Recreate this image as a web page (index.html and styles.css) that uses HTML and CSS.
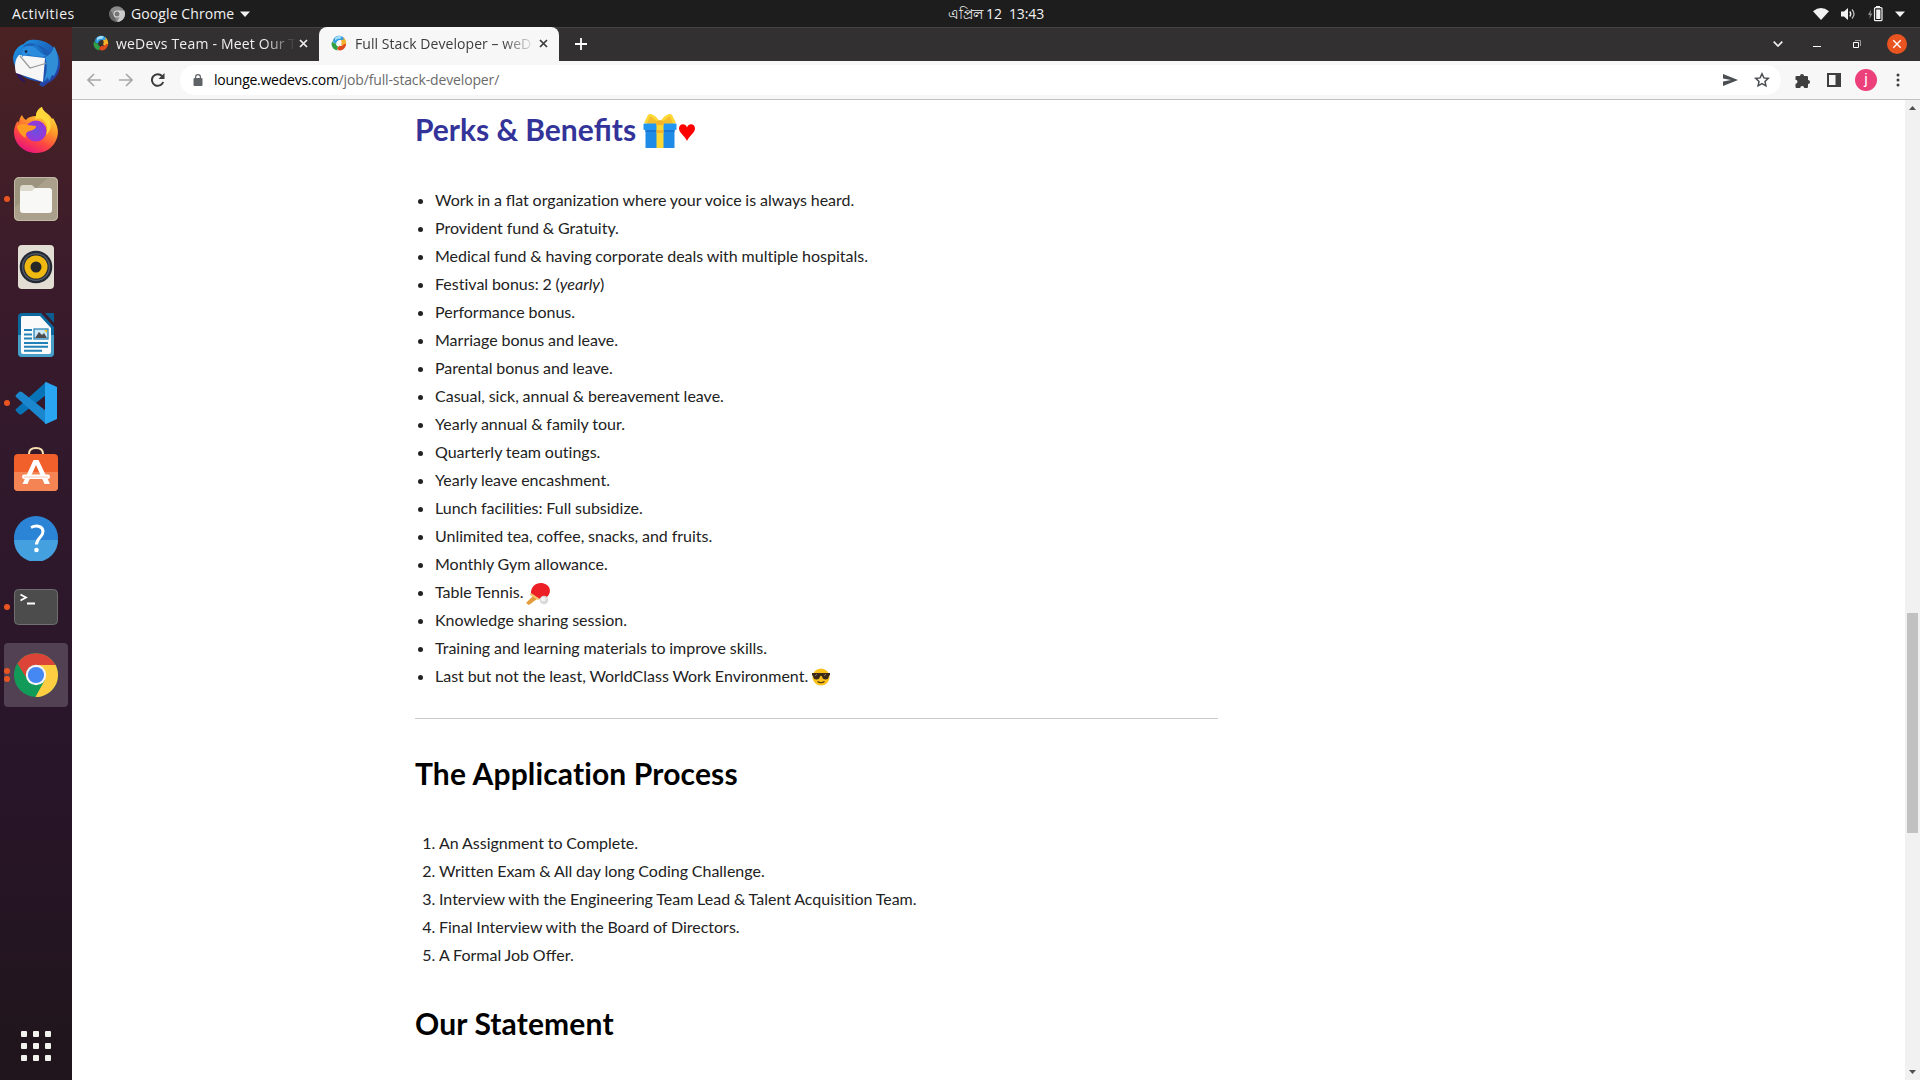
FILE: index.html
```html
<!DOCTYPE html>
<html lang="en">
<head>
<meta charset="utf-8">
<title>Full Stack Developer – weDevs</title>
<link rel="stylesheet" href="styles.css">
</head>
<body>
<svg class="defs" width="0" height="0" aria-hidden="true">
  <defs>
    <symbol id="favicon" viewBox="0 0 16 16">
      <path d="M2 6C2.500 2.500 5.500.3 9 .8c2.500.4 4.500 2 5 4.200L9.800 5C7.300 4.500 5.500 6 5.200 8.400 3.400 8.400 2.200 7.500 2 6z" fill="#2f9be0"/>
      <path d="M4 2.800C6 .8 9 .5 11 1.500L9 4C7 3.500 5 4.500 4 6z" fill="#a5dcf7"/>
      <path d="M12 2.200c2.200 1.400 3.400 4 3.200 6.500-.2 1.500-1.200 2.700-2.600 3L10 9.500c1-1.500.8-3.300-.3-4.700l3 .3z" fill="#f3b229"/>
      <path d="M15 9c-.2 3.500-2.700 6.300-6 6.500-1.500.1-2.800-.8-3-2.500l2.600-2.300c1.800.6 3.600-.2 4.500-1.700z" fill="#df4a1d"/>
      <path d="M1.500 6C.4 7.500.3 9.800 1.100 11.500c.9 2.300 2.900 3.700 5.700 3.900-.9-1-.9-2.200.4-4C5.500 10.800 4.900 9.600 5.100 8.400 3 8.400 1.500 7.400 1.500 6z" fill="#2fa044"/>
    </symbol>
  </defs>
</svg>

<header class="topbar">
  <span class="activities">Activities</span>
  <span class="appmenu">
    <svg width="16" height="16" viewBox="0 0 16 16"><circle cx="8" cy="8" r="7.800" fill="#8a8a8a"/><path d="M8 4.500h7.200A7.800 7.800 0 0 1 8 15.800l3.200-6z" fill="#c9c9c9"/><path d="M1.500 4L5 10l2.500 5.700A7.800 7.800 0 0 1 1.500 4z" fill="#666"/><circle cx="8" cy="8" r="3.500" fill="#ddd"/><circle cx="8" cy="8" r="2.500" fill="#777"/></svg>
    <span class="appname">Google Chrome</span>
    <svg width="10" height="6" viewBox="0 0 10 6"><path d="M0 .5h10L5 6z" fill="#f2f2f2"/></svg>
  </span>
  <span class="clock"><span class="month">এপ্রিল</span> <span>12&nbsp; 13:43</span></span>
  <span class="status">
    <svg width="16" height="12" viewBox="0 0 16 12"><path d="M0 3.200Q8-3 16 3.200L8 12z" fill="#f2f2f2"/></svg>
    <svg width="15" height="14" viewBox="0 0 15 14"><path d="M0 4.500h3L7 1v12L3 9.500H0z" fill="#f2f2f2"/><path d="M8.800 4.500q2 2.500 0 5" fill="none" stroke="#f2f2f2" stroke-width="1.300"/><path d="M11 2.500q4 4.500 0 9" fill="none" stroke="#bbb" stroke-width="1.300"/></svg>
    <svg width="15" height="16" viewBox="0 0 15 16"><path d="M3 3.500L0 9h2l-.7 4L4.400 7.500H2.500z" fill="#8c8c8c"/><path d="M8 0h4v2H8z" fill="#f2f2f2"/><rect x="6.500" y="1.700" width="7.500" height="13" rx="1" fill="none" stroke="#f2f2f2" stroke-width="1.200"/><path d="M8.200 3.500h4.200v9.500H8.200z" fill="#f2f2f2"/></svg>
    <svg width="10" height="6" viewBox="0 0 10 6"><path d="M0 .5h10L5 6z" fill="#f2f2f2"/></svg>
  </span>
</header>

<div class="desktop">
  <nav class="dock">
    <div class="app">
      <svg width="50" height="50" viewBox="0 0 50 50">
        <defs><linearGradient id="tb" x1="0" y1="0" x2="1" y2="1"><stop offset="0" stop-color="#1f9be8"/><stop offset=".5" stop-color="#1b63bd"/><stop offset="1" stop-color="#2a2f98"/></linearGradient></defs>
        <path d="M2 20C3 12 8 7 13 6c2-4 8-5 13-4 13 1 23 11 23 24 0 9-5 16-12 19l-5 4-4-2 2-3C14 42 3 35 2 20z" fill="url(#tb)"/>
        <path d="M4 30c1 8 5 13 11 15l-3-5z" fill="#2b1660"/>
        <path d="M8 17l26 3-2 24L5 35C3 28 4 21 8 17z" fill="#f6f6f6"/>
        <path d="M9 18l10 12 17-5" fill="none" stroke="#999" stroke-width="1.200"/>
        <path d="M12 9c4-5 12-5 17 1 6 6 7 13 6 22l-3 13c7-3 9-9 10-16 0-11-6-20-16-22z" fill="#1c5db4"/>
        <path d="M11 15c0-6 6-9 12-6 4 2 6 7 13 9-9 2-15 0-19-2-2 1-4 1-6 3z" fill="#2b8bdd"/>
        <path d="M34 19c5-2 8-6 9-11 5 8 6 20 0 30l-2-1-3 6-1-4-4 4c3-8 4-16 1-24z" fill="#2f8ed6"/>
        <circle cx="15" cy="13.500" r="1.300" fill="#14213f"/>
      </svg>
    </div>
    <div class="app raised">
      <svg width="48" height="48" viewBox="0 0 48 48">
        <defs><linearGradient id="ff" x1=".8" y1="0" x2=".3" y2="1"><stop offset="0" stop-color="#fff04a"/><stop offset=".4" stop-color="#ff9a28"/><stop offset=".7" stop-color="#ff4742"/><stop offset="1" stop-color="#e5127f"/></linearGradient><radialGradient id="ffc"><stop offset="0" stop-color="#6b50e0"/><stop offset="1" stop-color="#9a35d8"/></radialGradient></defs>
        <path d="M10 9c1 2 2 4 4 5 2-3 6-4 10-4 0-4 3-8 6-9 1 5 8 7 10 12l1-1c5 8 6 14 4 20-3 9-11 15-21 15C12 47 2 38 2 26c0-5 2-9 4-11l1 2c0-3 1-6 3-8z" fill="url(#ff)"/>
        <circle cx="24" cy="25" r="10.500" fill="url(#ffc)"/>
        <path d="M23 14c2-2 7-2 9 1 4 4 4 9 2 14 5-4 6-11 3-17-2-4-7-5-7-11-4 2-6 5-6 9z" fill="#ffd83c"/>
        <path d="M5 20c4-3 7-2 10-1l9 1c0 3-3 4-6 5-3 0-5 3-4 7-4-2-8-6-9-12z" fill="#ff9b21"/>
      </svg>
    </div>
    <div class="app running">
      <svg width="46" height="46" viewBox="0 0 46 46"><rect x="1" y="1" width="44" height="44" rx="5" fill="#9d947f"/><path d="M1 32L36 1h4q5 0 5 5v34q0 5-5 5H6q-5 0-5-5z" fill="#aaa08b"/><rect x="1.500" y="1.500" width="43" height="43" rx="5" fill="none" stroke="#c2baa7"/><path d="M7 13q0-4 3-4h9l3 3-2 8H7z" fill="#dedacb"/><path d="M7 15h12l3-3h14q3 0 3 3v19q0 3-3 3H10q-3 0-3-3z" fill="#f8f8f7"/></svg>
    </div>
    <div class="app">
      <svg width="38" height="46" viewBox="0 0 38 46"><rect x="1" y="1" width="36" height="44" rx="4" fill="#e3ded3"/><circle cx="19" cy="23" r="16.300" fill="#232a36"/><circle cx="19" cy="23" r="14" fill="#555d68"/><circle cx="19" cy="23" r="12.700" fill="#232a36"/><circle cx="19" cy="23" r="11.500" fill="#f0b912"/><circle cx="19" cy="23" r="5.500" fill="#272727"/></svg>
    </div>
    <div class="app">
      <svg width="38" height="46" viewBox="0 0 38 46"><path d="M5 1h19l13 14v26q0 4-4 4H5q-4 0-4-4V5q0-4 4-4z" fill="#0b699e"/><path d="M1 23h36v18q0 4-4 4H5q-4 0-4-4z" fill="#479fc8"/><path d="M28 1h8q1 0 1 1v9z" fill="#0d5e90"/><path d="M5 4h18l11 12v24q0 2-2 2H6q-2 0-2-2V6q0-2 1-2z" fill="#fafafa"/><path d="M7 18h8M7 22.500h8M7 26.500h8M7 31h24M7 34.800h24M7 38.800h18" stroke="#2081b9" stroke-width="2"/><rect x="17" y="17" width="14" height="10" fill="#cce7f5" stroke="#1c7db2" stroke-width="1.200"/><path d="M18 26l4-6 3 3 2-2 3 5z" fill="#4c4c4c"/><path d="M27 18h3v3z" fill="#f1c40f"/></svg>
    </div>
    <div class="app running">
      <svg width="44" height="44" viewBox="0 0 44 44"><path d="M32 1L2 28q-1 1 0 2l3 3q1 1 3 0L32 14z" fill="#0873b6"/><path d="M32 43L2 16q-1-1 0-2l3-3q1-1 3 0l24 19z" fill="#1b87cf"/><path d="M32 1l11 5v32l-11 5q-1 0-1-1V2q0-1 1-1z" fill="#29a5f2"/></svg>
    </div>
    <div class="app raised high">
      <svg width="46" height="46" viewBox="0 0 46 46"><path d="M16 11V8q0-6 7-6t7 6v3" fill="none" stroke="#f8dfb0" stroke-width="2"/><rect x="1" y="8" width="44" height="37" rx="4" fill="#f15f2b"/><path d="M1 26h44v15q0 4-4 4H5q-4 0-4-4z" fill="#f48454"/><path d="M20.500 14h5L37 38h-5.500L23 19l-8.500 19H9.500z" fill="#fff"/><rect x="9" y="28.500" width="28" height="4.500" rx="2.200" fill="#fff"/><path d="M11 31h24" stroke="#f7bda3" stroke-width=".8"/></svg>
    </div>
    <div class="app raised">
      <svg width="46" height="46" viewBox="0 0 46 46"><circle cx="23" cy="23" r="22" fill="#2b84d6"/><path d="M1 25a22 22 0 0 0 44 0z" fill="#45a0e0"/><path d="M18 12.500c6-3 12-1 12 4 0 6-6.500 6-6.500 13" fill="none" stroke="#fff" stroke-width="3"/><circle cx="23.500" cy="35" r="2.300" fill="#fff"/></svg>
    </div>
    <div class="app running">
      <svg width="46" height="38" viewBox="0 0 46 38"><rect x="1.500" y="1.500" width="43" height="35" rx="4" fill="#4c4c4c" stroke="#6f6f6f"/><path d="M7.500 6.500l5.500 3-5.500 3M14 15.500h8" fill="none" stroke="#fff" stroke-width="1.800"/></svg>
    </div>
    <div class="app active running twice">
      <svg width="46" height="46" viewBox="0 0 46 46"><circle cx="23" cy="23" r="22" fill="#129b58"/><path d="M23 12.800h19.500A22 22 0 0 1 22.500 45l9.300-17z" fill="#fecd41"/><path d="M4.400 11.500A22 22 0 0 1 42.600 13H23a10 10 0 0 0-9.500 13z" fill="#dc4437"/><circle cx="23" cy="23" r="10.200" fill="#f4f4f4"/><circle cx="23" cy="23" r="8.100" fill="#4587f3"/></svg>
    </div>
    <div class="launcher"><i></i><i></i><i></i><i></i><i></i><i></i><i></i><i></i><i></i></div>
  </nav>

  <div class="window">
    <div class="tabstrip">
      <div class="tab">
        <svg class="fav" width="16" height="16"><use href="#favicon"/></svg>
        <span class="tabtitle">weDevs Team - Meet Our T</span>
        <svg class="x" width="9" height="9" viewBox="0 0 9 9"><path d="M1 1l7 7M8 1L1 8" stroke="#f0f0f0" stroke-width="1.700"/></svg>
      </div>
      <div class="tab current">
        <svg class="fav" width="16" height="16"><use href="#favicon"/></svg>
        <span class="tabtitle">Full Stack Developer – weD</span>
        <svg class="x" width="9" height="9" viewBox="0 0 9 9"><path d="M1 1l7 7M8 1L1 8" stroke="#3c3c3c" stroke-width="1.700"/></svg>
      </div>
      <svg class="newtab" width="12" height="12" viewBox="0 0 12 12"><path d="M6 0v12M0 6h12" stroke="#fff" stroke-width="1.800"/></svg>
      <div class="controls">
        <svg width="10" height="6" viewBox="0 0 10 6"><path d="M.7.700L5 5 9.300.700" fill="none" stroke="#f0f0f0" stroke-width="1.700"/></svg>
        <svg class="min" width="8" height="8" viewBox="0 0 8 8"><path d="M0 6.500h8" stroke="#fff"/></svg>
        <svg class="restore" width="8" height="8" viewBox="0 0 8 8"><path d="M.5 2.500h5v5h-5z" fill="none" stroke="#fff"/><path d="M2 .5h5.500V6" fill="none" stroke="#999"/></svg>
        <svg class="close" width="20" height="20" viewBox="0 0 20 20"><circle cx="10" cy="10" r="10" fill="#e95420"/><path d="M6.300 6.300l7.400 7.400M13.700 6.300l-7.400 7.400" stroke="#fff" stroke-width="1.400"/></svg>
      </div>
    </div>

    <div class="toolbar">
      <svg width="14" height="14" viewBox="0 0 14 14"><path d="M14 7H1.500M7 1L1 7l6 6" fill="none" stroke="#a9a9a9" stroke-width="1.700"/></svg>
      <svg width="14" height="14" viewBox="0 0 14 14"><path d="M0 7h12.500M7 1l6 6-6 6" fill="none" stroke="#a9a9a9" stroke-width="1.700"/></svg>
      <svg width="14" height="14" viewBox="0 0 14 14"><path d="M12.200 9A5.800 5.800 0 1 1 11 3" fill="none" stroke="#3b3b3b" stroke-width="2"/><path d="M13.500 0v6h-6z" fill="#3b3b3b"/></svg>
      <div class="omnibox">
        <svg width="10" height="12" viewBox="0 0 10 12"><rect x=".5" y="4" width="9" height="8" rx="1" fill="#5f6368"/><path d="M2.600 5V3a2.400 2.400 0 0 1 4.800 0v2" fill="none" stroke="#5f6368" stroke-width="1.200"/></svg>
        <span class="url"><b>lounge.wedevs.com</b><span class="path">/job/full-stack-developer/</span></span>
        <svg class="send" width="15" height="12" viewBox="0 0 15 12"><path d="M0 0l15 6-15 6V7.500L8 6 0 4.500z" fill="#4a4d51"/></svg>
        <svg width="16" height="16" viewBox="0 0 16 16"><path d="M8 1.800l1.900 4.100 4.400.5-3.300 3 .9 4.400L8 11.600l-3.900 2.200.9-4.400-3.300-3 4.400-.5z" fill="none" stroke="#4a4d51" stroke-width="1.500"/></svg>
      </div>
      <div class="actions">
        <svg width="15" height="15" viewBox="0 0 15 15"><path d="M1.500 3H5a2 2 0 1 1 4 0h3q1 0 1 1v3a2 2 0 1 1 0 4v3q0 1-1 1H9.200a2 2 0 0 0-4 0H1.500q-1 0-1-1v-3.200a2 2 0 0 0 0-4V4q0-1 1-1z" fill="#3f3f3f"/></svg>
        <svg width="14" height="14" viewBox="0 0 14 14"><path d="M0 0h14v14H0zM2 2v10h6.500V2z" fill="#3f3f3f" fill-rule="evenodd"/></svg>
        <span class="avatar">j</span>
        <svg width="4" height="14" viewBox="0 0 4 14"><g fill="#3f3f3f"><circle cx="2" cy="2" r="1.500"/><circle cx="2" cy="7" r="1.500"/><circle cx="2" cy="12" r="1.500"/></g></svg>
      </div>
    </div>

    <div class="viewport">
      <main class="page">
        <h2 class="perks">Perks &amp; Bene<span class="lig">fi</span>ts
          <svg class="gift" width="34" height="34" viewBox="0 0 34 34"><path d="M17 8C12 0 6-1 5 1L1 9l15 3zM17 8c5-8 11-9 12-7l4 8-15 3z" fill="#fdd835"/><path d="M7 2l9 7-12 1zM27 2l-9 7 12 1z" fill="#f6bd2e"/><rect x="2.500" y="16" width="29" height="18" fill="#1e8ce6"/><path d="M2.500 16h29v2h-29z" fill="#1976d2"/><rect x=".5" y="9.500" width="33" height="6.500" rx="1" fill="#2196f3"/><path d="M13.500 9.500h7V34h-7z" fill="#fdd835"/><path d="M13.500 16h7v3h-7z" fill="#f4b52c"/><path d="M13 8q4-4 8 0v3h-8z" fill="#f4b52c"/></svg><svg class="heart" width="16" height="17" viewBox="0 0 16 17"><path d="M8 17C6 12 0 9 0 4.500 0-.5 6.500-1.500 8 3.500 9.500-1.500 16-.5 16 4.500 16 9 10 12 8 17z" fill="red"/></svg></h2>
        <ul>
          <li>Work in a <span class="lig">fl</span>at organization where your voice is always heard.</li>
          <li>Provident fund &amp; Gratuity.</li>
          <li>Medical fund &amp; having corporate deals with multiple hospitals.</li>
          <li>Festival bonus: 2 (<em>yearly</em>)</li>
          <li>Performance bonus.</li>
          <li>Marriage bonus and leave.</li>
          <li>Parental bonus and leave.</li>
          <li>Casual, sick, annual &amp; bereavement leave.</li>
          <li>Yearly annual &amp; family tour.</li>
          <li>Quarterly team outings.</li>
          <li>Yearly leave encashment.</li>
          <li>Lunch facilities: Full subsidize.</li>
          <li>Unlimited tea, co<span class="lig">ff</span>ee, snacks, and fruits.</li>
          <li>Monthly Gym allowance.</li>
          <li>Table Tennis. <svg class="paddle" width="24" height="22" viewBox="0 0 24 22"><path d="M0 20l7-7 4 3-8 6z" fill="#e39b3b"/><path d="M5 12C4 4 10-1 17 .3c5 1 8 5 6.500 10C22 14 19 16 14 16z" fill="#ec1f27"/><path d="M4 12l8 5 2-1-9-6z" fill="#f5c26b"/><circle cx="18" cy="17" r="4.300" fill="#d9d9d9"/><circle cx="17.300" cy="16.300" r="2.300" fill="#f3f3f3"/></svg></li>
          <li>Knowledge sharing session.</li>
          <li>Training and learning materials to improve skills.</li>
          <li>Last but not the least, WorldClass Work Environment. <svg class="cool" width="18" height="18" viewBox="0 0 18 18"><circle cx="9" cy="9" r="8.600" fill="#fcc21b"/><path d="M0 5h18v2l-1 1q-.5 3.500-3.500 3.500T10 8.500q-1-1.500-2 0-.5 3-3.500 3T1 8L0 7z" fill="#3b2a17"/><path d="M3 8l2-2M12 8l2-2" stroke="#8b7a5e"/><path d="M5.500 13.500q3.500 2.500 7 0" fill="none" stroke="#4b3513" stroke-width="1.200"/></svg></li>
        </ul>
        <hr>
        <h2>The Application Process</h2>
        <ol>
          <li>An Assignment to Complete.</li>
          <li>Written Exam &amp; All day long Coding Challenge.</li>
          <li>Interview with the Engineering Team Lead &amp; Talent Acquisition Team.</li>
          <li>Final Interview with the Board of Directors.</li>
          <li>A Formal Job O<span class="lig">ff</span>er.</li>
        </ol>
        <h2>Our Statement</h2>
      </main>
      <div class="scrollbar">
        <svg width="7" height="4" viewBox="0 0 7 4"><path d="M0 4L3.500 0 7 4z" fill="#505050"/></svg>
        <div class="thumb"></div>
        <svg class="down" width="7" height="4" viewBox="0 0 7 4"><path d="M0 0l3.500 4L7 0z" fill="#505050"/></svg>
      </div>
    </div>
  </div>
</div>
</body>
</html>
```
FILE: styles.css
```css
* { box-sizing: border-box; }
body {
  margin: 0;
  width: 1920px;
  height: 1080px;
  overflow: hidden;
  display: flex;
  flex-direction: column;
  font-family: "Open Sans", "Noto Sans", sans-serif;
}
svg { display: block; flex: none; }
.defs { position: absolute; }

/* system bar */
.topbar {
  height: 27px;
  flex: none;
  background: #1d1d1d;
  color: #f2f2f2;
  font-size: 14px;
  line-height: 26px;
  display: grid;
  grid-template-columns: 97px 1fr auto 1fr;
  align-items: center;
  padding: 0 15px 0 12px;
}
.activities { letter-spacing: .5px; }
.appmenu { display: flex; align-items: center; gap: 6px; letter-spacing: .1px; }
.clock { white-space: pre; margin-right: 22px; letter-spacing: -.1px; }
.status { display: flex; align-items: center; justify-content: flex-end; gap: 12px; }

.desktop { flex: 1; display: flex; min-height: 0; }

/* dock */
.dock {
  width: 72px;
  flex: none;
  padding: 4px 4px 19px;
  display: flex;
  flex-direction: column;
  gap: 4px;
  background: linear-gradient(#4a2223 0, #3a1b2c 25%, #2f182b 45%, #29152a 70%, #21151d 96%);
}
.app {
  width: 64px;
  height: 64px;
  flex: none;
  display: flex;
  align-items: center;
  justify-content: center;
  position: relative;
}
.app.raised { padding-bottom: 2px; }
.app.high { padding-bottom: 4px; }
.app.active { background: #524153; border-radius: 4px; }
.running::before {
  content: "";
  position: absolute;
  left: 0;
  top: 29px;
  width: 6px;
  height: 6px;
  border-radius: 50%;
  background: #e95420;
}
.twice::before { top: 25px; box-shadow: 0 8px #e95420; }
.launcher {
  margin: auto auto 0;
  display: grid;
  grid-template-columns: repeat(3, 6px);
  gap: 6px;
}
.launcher i { height: 6px; border-radius: 1px; background: #f2f2ee; }

/* browser window */
.window { flex: 1; display: flex; flex-direction: column; min-width: 0; }
.tabstrip {
  height: 34px;
  flex: none;
  display: flex;
  align-items: center;
  background: #333031;
  border-top: 1px solid #454344;
  padding: 0 13px 0 7px;
}
.tab {
  width: 240px;
  height: 34px;
  margin-top: -1px;
  display: flex;
  align-items: center;
  padding: 0 11px 2px 14px;
  color: #f0f0f0;
  font-size: 14px;
  letter-spacing: .2px;
}
.tab.current {
  background: #f7f7f7;
  color: #3c3c3c;
  border-radius: 8px 8px 0 0;
  padding-left: 12px;
  letter-spacing: .06px;
}
.tabtitle {
  width: 180px;
  margin-left: 7px;
  white-space: nowrap;
  mask-image: linear-gradient(90deg, #000 148px, transparent 180px);
}
.current .tabtitle { margin-left: 8px; }
.x { margin-left: auto; }
.newtab { margin: 0 0 1px 16px; }
.controls { margin: 0 0 1px auto; display: flex; align-items: center; }
.min { margin-left: 30px; }
.restore { margin-left: 32px; }
.close { margin-left: 26px; }

.toolbar {
  height: 39px;
  flex: none;
  display: flex;
  align-items: center;
  gap: 18px;
  background: #f7f7f7;
  border-bottom: 1px solid #c2c2c2;
  padding: 0 20px 0 15px;
}
.omnibox {
  flex: 1;
  height: 30px;
  margin-left: -3px;
  border-radius: 15px;
  background: #fff;
  display: flex;
  align-items: center;
  padding: 0 11px 0 13px;
  font-size: 14px;
}
.url {
  margin-left: 11px;
  padding-bottom: 2px;
  color: #6b6b6b;
  letter-spacing: -.14px;
}
.url b { font-weight: 400; color: #000; letter-spacing: -.25px; }
.send { margin: 0 16px 0 auto; }
.actions { display: flex; align-items: center; gap: 15px; margin-left: -4px; }
.actions svg:nth-child(2) { margin-left: 2px; margin-right: -1px; }
.actions svg:last-child { margin-left: 4px; }
.avatar {
  width: 22px;
  height: 22px;
  border-radius: 50%;
  background: #ec407a;
  color: #fff;
  font-family: Roboto, sans-serif;
  font-size: 15px;
  line-height: 21px;
  text-align: center;
}

/* page */
.viewport { flex: 1; display: flex; min-height: 0; background: #fff; overflow: hidden; }
.page {
  width: 803px;
  margin-left: 343px;
  padding-top: 11px;
  font-family: Lato, sans-serif;
  font-size: 16px;
  line-height: 28px;
  word-spacing: -.3px;
  font-variant-ligatures: none;
  color: #222;
}
.lig { font-variant-ligatures: normal; }
h2 {
  margin: 0;
  font-size: 30px;
  line-height: 36px;
  font-weight: 700;
  letter-spacing: .14px;
  word-spacing: 0;
  color: #000;
  height: 36px;
}
.perks { color: #339; letter-spacing: -.03px; }
.perks .lig { letter-spacing: 0; }
.page svg { display: inline-block; }
.gift { vertical-align: -7px; }
.heart { vertical-align: 0; margin-left: 2px; }
.paddle { vertical-align: -7px; margin: -10px 0 0 -1px; }
.cool { vertical-align: -4px; margin-top: -5px; }
ul { margin: 39px 0 0; padding-left: 20px; }
ol { margin: 38px 0 0; padding-left: 24px; }
li { height: 28px; }
hr { margin: 28px 0 36px; border: 0; border-top: 1px solid #ccc; }
ol + h2 { margin-top: 36px; }

.scrollbar {
  width: 15px;
  margin-left: auto;
  background: #f1f1f1;
  display: flex;
  flex-direction: column;
  align-items: center;
  padding: 6px 0 6px;
}
.thumb { width: 11px; height: 220px; margin-top: 503px; background: #c1c1c1; }
.down { margin-top: auto; }
```
